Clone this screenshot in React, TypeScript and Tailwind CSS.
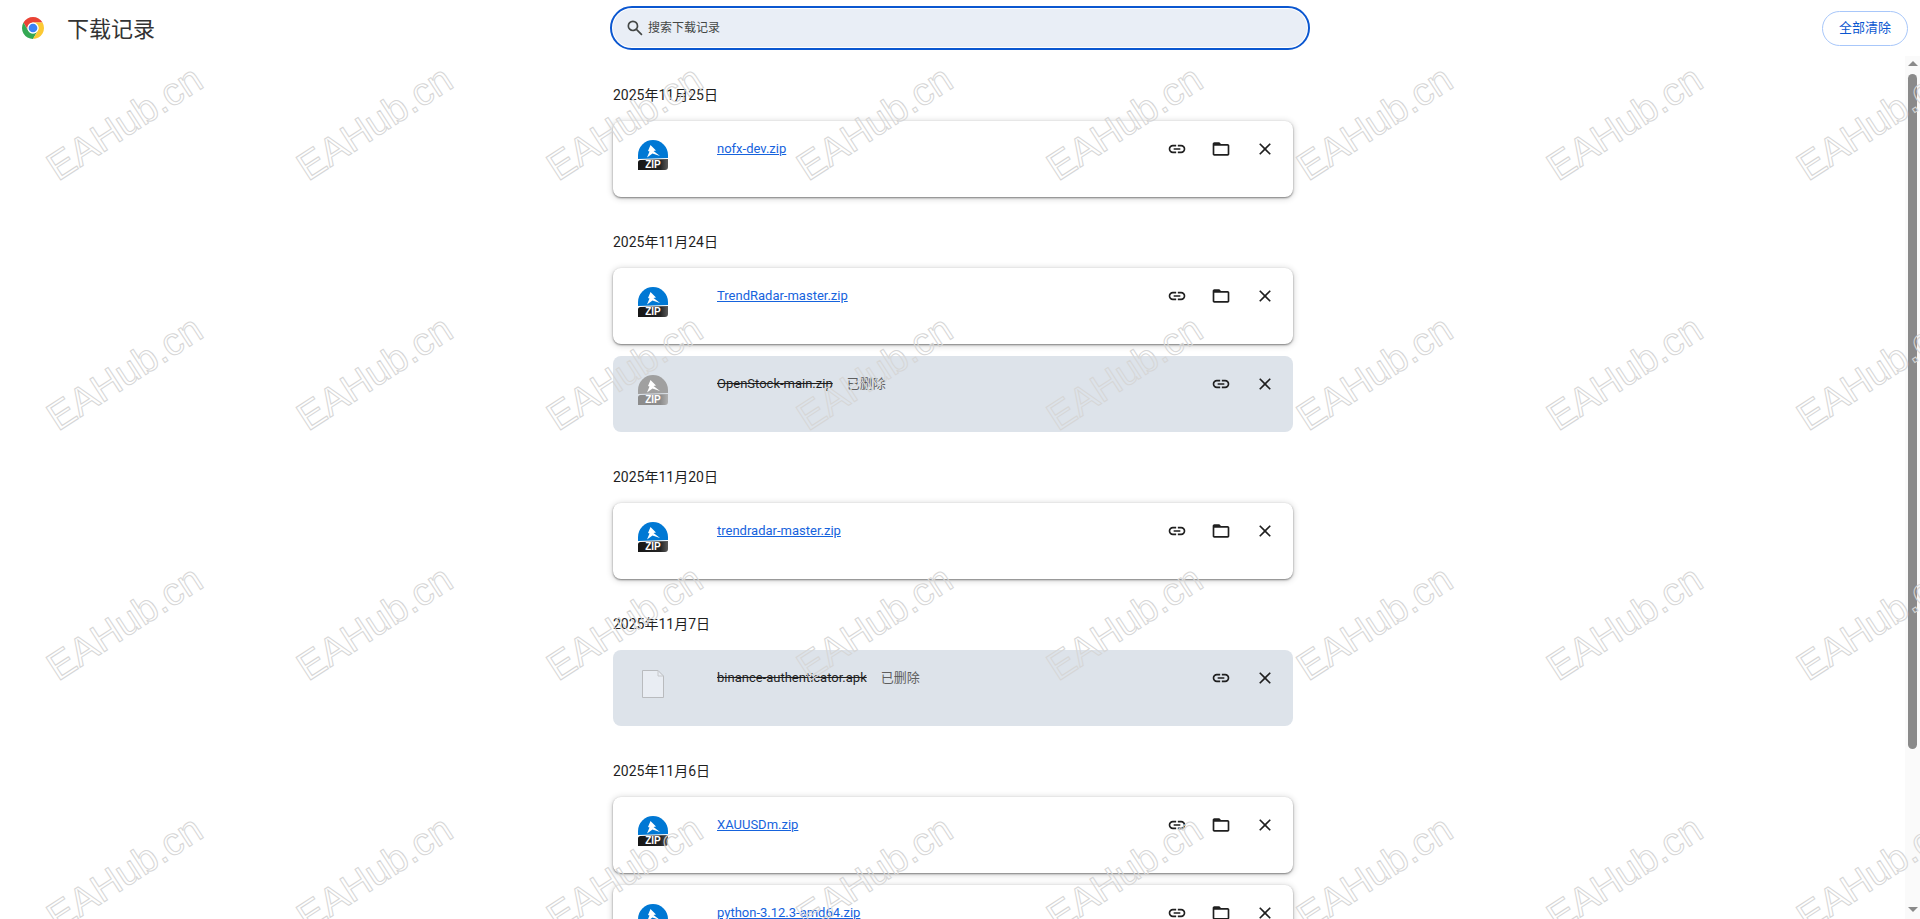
import React from "react";

const fontStack = "font-['Roboto','Noto_Sans_CJK_SC',sans-serif]";

type Item = { name: string; deleted?: boolean; kind?: "zip" | "file" };

const groups: { date: string; items: Item[] }[] = [
  { date: "2025年11月25日", items: [{ name: "nofx-dev.zip" }] },
  {
    date: "2025年11月24日",
    items: [{ name: "TrendRadar-master.zip" }, { name: "OpenStock-main.zip", deleted: true }],
  },
  { date: "2025年11月20日", items: [{ name: "trendradar-master.zip" }] },
  {
    date: "2025年11月7日",
    items: [{ name: "binance-authenticator.apk", deleted: true, kind: "file" }],
  },
  {
    date: "2025年11月6日",
    items: [{ name: "XAUUSDm.zip" }, { name: "python-3.12.3-amd64.zip" }],
  },
];

function ChromeLogo() {
  return (
    <svg width="22" height="22" viewBox="0 0 48 48" className="shrink-0">
      <path d="M24 12H44.780A24 24 0 0 0 3.220 12L13.600 30A12 12 0 0 1 24 12Z" fill="#ea4335" />
      <path d="M13.600 30 3.220 12A24 24 0 0 0 24 48L34.400 30A12 12 0 0 1 13.600 30Z" fill="#34a853" />
      <path d="M34.400 30 24 48A24 24 0 0 0 44.780 12H24A12 12 0 0 1 34.400 30Z" fill="#fcc934" />
      <circle cx="24" cy="24" r="12" fill="#fff" />
      <circle cx="24" cy="24" r="9.500" fill="#3b82f6" />
    </svg>
  );
}

function ZipIcon({ muted }: { muted?: boolean }) {
  const id = muted ? "zip-band-muted" : "zip-band";
  return (
    <svg width="30" height="30" viewBox="0 0 30 30" className="shrink-0">
      <defs>
        <linearGradient id={id} x1="0" y1="0" x2="1" y2="0">
          <stop offset="0" stopColor={muted ? "#8c8c8c" : "#161616"} />
          <stop offset="0.75" stopColor={muted ? "#8c8c8c" : "#242424"} />
          <stop offset="1" stopColor={muted ? "#b0b0b0" : "#5a5a5a"} />
        </linearGradient>
      </defs>
      <path d="M0 15a15 15 0 0 1 30 0v3L0 19z" fill={muted ? "#a0a0a0" : "#0078d4"} />
      <path d="M12.500 5 18 10.500 15.500 11 22 16 14.500 13.500 9 17.500 11.500 11.500 10 11z" fill="#fff" />
      <path d="M2.500 20 30 19V27a3 3 0 0 1-3 3H0v-7.500A2.500 2.500 0 0 1 2.500 20z" fill={`url(#${id})`} />
      <text
        x="15"
        y="28.400"
        textAnchor="middle"
        fontSize="10"
        fontWeight="700"
        fill="#fff"
        fontFamily="'Liberation Sans',sans-serif"
      >
        ZIP
      </text>
    </svg>
  );
}

function FileIcon() {
  return (
    <svg width="30" height="30" viewBox="0 0 30 30" className="shrink-0">
      <path d="M4.500 1.500h15.500l5.500 5.500V28.500h-21z" fill="#e9edf3" stroke="#b9bbbe" />
      <path d="M20 1.500V7h5.500" fill="none" stroke="#c6c8cb" />
    </svg>
  );
}

function SearchIcon() {
  return (
    <svg width="20" height="20" viewBox="0 -960 960 960" fill="#444746" className="shrink-0">
      <path d="M784-120 532-372q-30 24-69 38t-83 14q-109 0-184.500-75.500T120-580q0-109 75.500-184.500T380-840q109 0 184.500 75.500T640-580q0 44-14 83t-38 69l252 252-56 56ZM380-400q75 0 127.500-52.500T560-580q0-75-52.500-127.500T380-760q-75 0-127.500 52.500T200-580q0 75 52.500 127.500T380-400Z" />
    </svg>
  );
}

function LinkIcon() {
  return (
    <svg width="20" height="20" viewBox="0 -960 960 960" fill="#1f1f1f">
      <path d="M280-280q-83 0-141.500-58.500T80-480q0-83 58.500-141.500T280-680h160v80H280q-50 0-85 35t-35 85q0 50 35 85t85 35h160v80H280Zm40-160v-80h320v80H320Zm200 160v-80h160q50 0 85-35t35-85q0-50-35-85t-85-35H520v-80h160q83 0 141.500 58.500T880-480q0 83-58.500 141.500T680-280H520Z" />
    </svg>
  );
}

function FolderIcon() {
  return (
    <svg width="20" height="20" viewBox="0 -960 960 960" fill="#1f1f1f">
      <path d="M160-160q-33 0-56.500-23.500T80-240v-480q0-33 23.500-56.500T160-800h240l80 80h320q33 0 56.500 23.500T880-640v400q0 33-23.500 56.500T800-160H160Zm0-80h640v-400H160v400Z" />
    </svg>
  );
}

function CloseIcon() {
  return (
    <svg width="20" height="20" viewBox="0 -960 960 960" fill="#1f1f1f">
      <path d="m256-200-56-56 224-224-224-224 56-56 224 224 224-224 56 56-224 224 224 224-56 56-224-224-224 224Z" />
    </svg>
  );
}

function DownloadCard({ item }: { item: Item }) {
  const cardStyle = item.deleted
    ? "bg-[#dde3ea]"
    : "bg-white shadow-[0_1px_2px_rgba(0,0,0,0.45),0_1px_6px_1px_rgba(0,0,0,0.16)]";

  return (
    <div className={`flex h-[76px] rounded-lg ${cardStyle}`}>
      <div className="pl-[25px] pt-[19px] w-[104px] shrink-0">
        {item.kind === "file" ? <FileIcon /> : <ZipIcon muted={item.deleted} />}
      </div>
      <div className="flex-1 pt-[18px] text-[13px] leading-5 whitespace-nowrap">
        {item.deleted ? (
          <>
            <span className="text-[#1f1f1f] line-through">{item.name}</span>
            <span className="ml-3.5 text-[#5e5e5e]">已删除</span>
          </>
        ) : (
          <a href="#" className="text-[#1663dd] underline">
            {item.name}
          </a>
        )}
      </div>
      <div className="flex gap-2 pt-2.5 pr-2.5">
        <button className="flex w-9 h-9 items-center justify-center">
          <LinkIcon />
        </button>
        {!item.deleted && (
          <button className="flex w-9 h-9 items-center justify-center">
            <FolderIcon />
          </button>
        )}
        <button className="flex w-9 h-9 items-center justify-center">
          <CloseIcon />
        </button>
      </div>
    </div>
  );
}

function Scrollbar() {
  return (
    <div className="flex flex-col items-center w-[15px] shrink-0 bg-[#fafafa]">
      <div className="mt-[5px] w-0 h-0 border-x-[5px] border-x-transparent border-b-[5px] border-b-[#8a8a8a]" />
      <div className="mt-2 w-[9px] h-[675px] rounded-full bg-[#8a8a8a]" />
      <div className="mt-auto mb-[7px] w-0 h-0 border-x-[5px] border-x-transparent border-t-[5px] border-t-[#8a8a8a]" />
    </div>
  );
}

function Watermark() {
  return (
    <div className="absolute inset-0 overflow-hidden pointer-events-none grid grid-cols-[repeat(8,250px)] auto-rows-[250px]">
      {Array.from({ length: 32 }).map((_, i) => (
        <div key={i} className="flex items-center justify-center">
          <span className="-translate-y-[2px] -rotate-[33deg] text-[39px] text-transparent [-webkit-text-stroke:1px_#d6d6d6] font-['Liberation_Sans',sans-serif]">
            EAHub.cn
          </span>
        </div>
      ))}
    </div>
  );
}

export default function App() {
  return (
    <div className={`relative h-[919px] flex flex-col overflow-hidden bg-white ${fontStack}`}>
      {/* toolbar */}
      <header className="flex items-center h-14 shrink-0">
        <div className="flex items-center w-[610px] pl-[22px]">
          <ChromeLogo />
          <h1 className="ml-[23px] mt-0.5 text-[22px] text-[#333333]">下载记录</h1>
        </div>
        <div className="w-[700px] h-11 rounded-full border-2 border-[#0b57d0] p-px">
          <div className="flex items-center h-full rounded-full bg-[#e9eef6] pl-3">
            <SearchIcon />
            <span className="ml-[3px] text-xs text-[#444746]">搜索下载记录</span>
          </div>
        </div>
        <div className="flex flex-1 justify-end pr-3">
          <button className="w-[86px] h-[35px] rounded-full border border-[#a8c7fa] text-[13px] text-[#0b57d0]">
            全部清除
          </button>
        </div>
      </header>

      <div className="flex flex-1 min-h-0">
        <main className="flex-1 min-w-0 overflow-hidden pl-px pt-[29px]">
          <div className="w-[680px] mx-auto flex flex-col gap-[35px]">
            {groups.map((group) => (
              <section key={group.date}>
                <div className="h-5 mb-4 text-sm leading-5 text-[#1f1f1f]">{group.date}</div>
                <div className="flex flex-col gap-3">
                  {group.items.map((item) => (
                    <DownloadCard key={item.name} item={item} />
                  ))}
                </div>
              </section>
            ))}
          </div>
        </main>
        <Scrollbar />
      </div>

      <Watermark />
    </div>
  );
}
